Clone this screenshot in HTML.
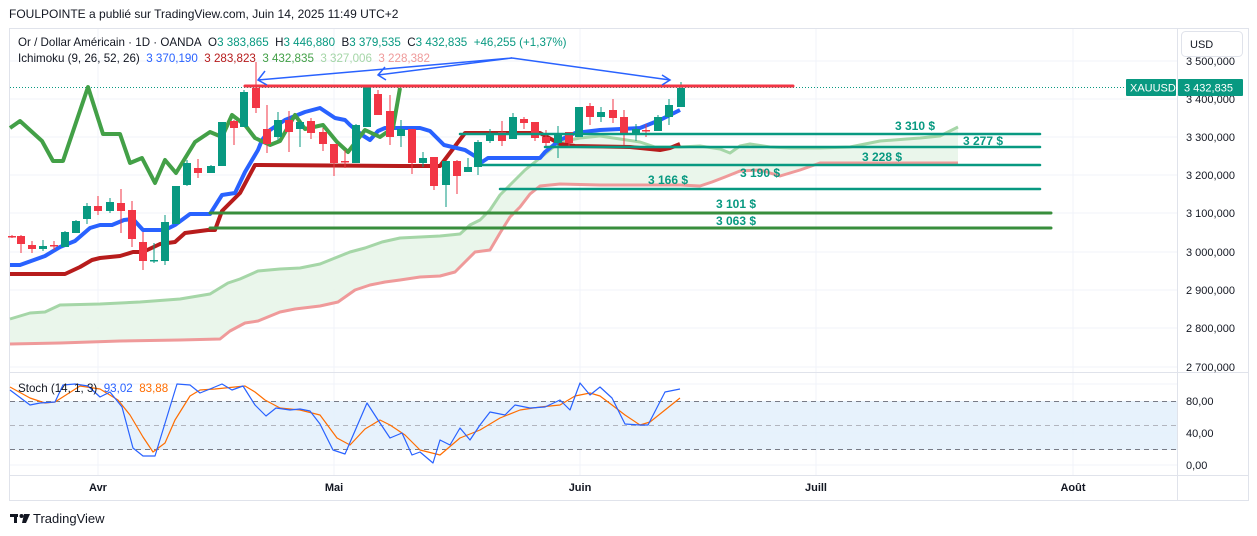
<!DOCTYPE html>
<html><head><meta charset="utf-8"><style>
body{margin:0;width:1257px;height:536px;background:#fff;font-family:"Liberation Sans",sans-serif;overflow:hidden;position:relative}
.t{position:absolute;white-space:nowrap}
</style></head><body>
<div class="t" style="left:9px;top:7px;font-size:12px;color:#131722">FOULPOINTE a publié sur TradingView.com, Juin 14, 2025 11:49 UTC+2</div>
<svg id="s" width="1257" height="536" style="position:absolute;left:0;top:0">
<rect x="9.5" y="28.5" width="1239" height="472" fill="none" stroke="#e0e3eb"/>
<g stroke="#f0f3fa" stroke-width="1">
<line x1="98" y1="29" x2="98" y2="475"/><line x1="334" y1="29" x2="334" y2="475"/><line x1="580" y1="29" x2="580" y2="475"/><line x1="816" y1="29" x2="816" y2="475"/><line x1="1073" y1="29" x2="1073" y2="475"/>
<line x1="10" y1="61" x2="1177" y2="61"/><line x1="10" y1="99" x2="1177" y2="99"/><line x1="10" y1="137" x2="1177" y2="137"/><line x1="10" y1="175" x2="1177" y2="175"/><line x1="10" y1="213" x2="1177" y2="213"/><line x1="10" y1="252" x2="1177" y2="252"/><line x1="10" y1="290" x2="1177" y2="290"/><line x1="10" y1="328" x2="1177" y2="328"/><line x1="10" y1="367" x2="1177" y2="367"/>
<line x1="10" y1="384" x2="1177" y2="384"/><line x1="10" y1="433" x2="1177" y2="433"/><line x1="10" y1="465" x2="1177" y2="465"/>
</g>
<line x1="10" y1="372.5" x2="1248" y2="372.5" stroke="#e0e3eb"/>
<line x1="10" y1="475.5" x2="1248" y2="475.5" stroke="#e0e3eb"/>
<line x1="1177.5" y1="29" x2="1177.5" y2="500" stroke="#e0e3eb"/>
<rect x="10" y="401" width="1167" height="49" fill="#e3f0fc" opacity="0.85"/>
<g stroke="#787b86" stroke-dasharray="5,4" stroke-width="1"><line x1="10" y1="401.5" x2="1177" y2="401.5"/><line x1="10" y1="425.5" x2="1177" y2="425.5" stroke="#b2b5be"/><line x1="10" y1="449.5" x2="1177" y2="449.5"/></g>
<line x1="10" y1="87.5" x2="1126" y2="87.5" stroke="#089981" stroke-dasharray="1,2"/>
<g id="ich"></g>
<g id="cnd"></g>
<g stroke-linecap="round">
<line x1="245" y1="86" x2="793" y2="86" stroke="#f23645" stroke-width="3"/>
<line x1="460" y1="134" x2="1040" y2="134" stroke="#089981" stroke-width="2.5"/>
<line x1="545" y1="147" x2="1040" y2="147" stroke="#089981" stroke-width="2.5"/>
<line x1="480" y1="165" x2="1040" y2="165" stroke="#089981" stroke-width="2.5"/>
<line x1="500" y1="189" x2="1040" y2="189" stroke="#089981" stroke-width="2.5"/>
<line x1="210" y1="213" x2="1051" y2="213" stroke="#388e3c" stroke-width="3"/>
<line x1="210" y1="228" x2="1051" y2="228" stroke="#388e3c" stroke-width="3"/>
</g>
<g stroke="#2962ff" stroke-width="1.5" fill="none">
<path d="M512 58 L258 80 M512 58 L378 75 M512 58 L670 80"/>
<path d="M265 71 L258 80 L267 85 M385 67 L378 75 L386 80 M662 75 L670 80 L662 85"/>
</g>
<g font-size="12" font-weight="bold" fill="#089981" font-family="Liberation Sans,sans-serif">
<text x="895" y="130">3 310 $</text><text x="963" y="145">3 277 $</text><text x="862" y="161">3 228 $</text><text x="740" y="177">3 190 $</text><text x="648" y="184">3 166 $</text><text x="716" y="208">3 101 $</text><text x="716" y="225">3 063 $</text>
</g>
<g id="st"></g>
<g font-size="11" fill="#131722" font-family="Liberation Sans,sans-serif">
<text x="1186" y="65">3 500,000</text>
<text x="1186" y="103">3 400,000</text><text x="1186" y="141">3 300,000</text><text x="1186" y="179">3 200,000</text><text x="1186" y="217">3 100,000</text><text x="1186" y="256">3 000,000</text><text x="1186" y="294">2 900,000</text><text x="1186" y="332">2 800,000</text><text x="1186" y="371">2 700,000</text>
<text x="1186" y="405">80,00</text><text x="1186" y="437">40,00</text><text x="1186" y="469">0,00</text>
</g>
<g font-size="11" font-weight="bold" fill="#131722" font-family="Liberation Sans,sans-serif" text-anchor="middle">
<text x="98" y="491">Avr</text><text x="334" y="491">Mai</text><text x="580" y="491">Juin</text><text x="816" y="491">Juill</text><text x="1073" y="491">Août</text>
</g>
<rect x="1181.5" y="31.5" width="61" height="25" rx="4" fill="#fff" stroke="#e0e3eb"/>
<text x="1190" y="48" font-size="11" fill="#131722">USD</text>
<rect x="1126" y="79" width="50" height="17" rx="1" fill="#089981"/>
<text x="1130" y="91.5" font-size="11" fill="#fff">XAUUSD</text>
<rect x="1178" y="79" width="65" height="17" rx="1" fill="#089981"/>
<text x="1184" y="91.5" font-size="11" fill="#fff">3 432,835</text>
<g fill="#131722"><rect x="10" y="514" width="8" height="3"/><rect x="14" y="514" width="3" height="9"/><circle cx="21.5" cy="516" r="2"/><path d="M24 514 L30 514 L26 523 L22 523 Z"/></g>
<text x="33" y="523" font-size="13" fill="#131722">TradingView</text>
</svg>
<div class="t" style="left:18px;top:36px;font-size:11.6px;color:#131722">Or / Dollar Américain · 1D · OANDA&nbsp; O<span style="color:#089981">3 383,865</span>&nbsp; H<span style="color:#089981">3 446,880</span>&nbsp; B<span style="color:#089981">3 379,535</span>&nbsp; C<span style="color:#089981">3 432,835</span>&nbsp; <span style="color:#089981">+46,255 (+1,37%)</span></div>
<div class="t" style="left:18px;top:52px;font-size:11.6px;color:#131722">Ichimoku (9, 26, 52, 26)&nbsp; <span style="color:#2962ff">3 370,190</span>&nbsp; <span style="color:#b71c1c">3 283,823</span>&nbsp; <span style="color:#43a047">3 432,835</span>&nbsp; <span style="color:#a5d6a7">3 327,006</span>&nbsp; <span style="color:#ef9a9a">3 228,382</span></div>
<div class="t" style="left:18px;top:382px;font-size:11.6px;color:#131722">Stoch (14, 1, 3)&nbsp; <span style="color:#2962ff">93,02</span>&nbsp; <span style="color:#ff6d00">83,88</span></div>
<script>
const NS="http://www.w3.org/2000/svg";
function el(p,t,a){const e=document.createElementNS(NS,t);for(const k in a)e.setAttribute(k,a[k]);p.appendChild(e);return e}
function pl(p,pts,c,w,extra){const a={points:pts.map(q=>q.join(',')).join(' '),fill:'none',stroke:c,'stroke-width':w,'stroke-linejoin':'round'};Object.assign(a,extra||{});return el(p,'polyline',a)}
const A=[[10,319],[30,313],[45,312],[60,305],[100,304],[140,302],[180,299],[210,294],[228,283],[240,279],[258,271],[280,269],[300,268],[320,264],[335,258],[350,252],[365,248],[382,242],[400,238],[420,237],[440,236],[460,234],[470,225],[480,220],[490,210],[500,195],[510,185],[525,170],[540,158],[560,142],[580,138],[600,136],[620,139],[640,142],[655,147],[680,147],[700,146],[720,149],[730,153],[740,146],[750,144],[770,147],[790,148],[820,148],[850,147],[880,141],[920,138],[940,136],[958,127]];
const B=[[10,344],[60,343],[120,341],[180,340],[220,339],[230,331],[245,323],[258,321],[280,312],[295,309],[320,306],[338,302],[355,290],[370,285],[385,282],[400,280],[420,277],[440,276],[455,272],[462,265],[475,252],[490,250],[500,233],[510,217],[520,207],[530,194],[540,186],[560,184],[600,185],[640,185],[680,185],[700,186],[712,182],[725,177],[740,171],[760,170],[780,176],[800,170],[820,163],[850,163],[920,163],[958,163]];
const g=document.getElementById('ich');
el(g,'polygon',{points:A.concat(B.slice().reverse()).map(q=>q.join(',')).join(' '),fill:'#e8f5e9',opacity:0.9});
pl(g,A,'#a5d6a7',3);pl(g,B,'#ef9a9a',3);
pl(g,[[10,274],[65,274],[80,267],[92,260],[100,258],[120,256],[133,252],[143,252],[160,244],[175,242],[185,233],[208,230],[215,230],[222,211],[240,193],[255,165],[260,165],[400,166],[440,166],[465,133],[475,133],[540,133],[560,144],[575,146],[630,147],[660,150],[670,148],[680,144]],'#b71c1c',4);
pl(g,[[10,265],[20,265],[45,256],[60,247],[75,241],[90,228],[100,225],[112,225],[124,220],[133,219],[143,230],[165,230],[175,225],[190,214],[210,214],[222,195],[235,193],[245,172],[258,150],[262,140],[270,130],[285,120],[305,112],[320,108],[335,118],[345,120],[350,125],[362,135],[370,140],[378,131],[385,128],[420,128],[430,131],[444,145],[465,150],[478,158],[482,162],[488,158],[540,158],[545,152],[560,140],[575,133],[600,130],[640,128],[660,120],[680,110]],'#2962ff',4);
pl(g,[[10,128],[20,121],[42,141],[53,161],[63,161],[88,87],[103,134],[120,134],[130,163],[142,158],[155,183],[165,160],[176,173],[195,142],[210,132],[222,137],[232,115],[245,125],[255,138],[270,145],[280,141],[295,115],[305,129],[323,125],[337,142],[348,152],[365,130],[380,137],[393,128],[400,88]],'#43a047',4);
const C=[[12,236,237,235,238],[21,236,244,235,253],[32,245,249,241,253],[43,249,246,240,251],[54,245,246,241,250],[65,247,232,231,247],[76,233,221,220,224],[87,219,206,203,224],[98,206,211,196,215],[110,211,202,198,213],[121,203,211,189,233],[132,210,239,201,247],[143,242,261,232,270],[154,261,260,243,263],[165,261,222,215,265],[176,224,186,186,223],[187,185,163,160,186],[198,168,173,159,178],[211,173,166,165,173],[222,166,122,122,166],[234,121,128,120,145],[244,127,92,90,127],[256,88,108,62,113],[267,129,144,105,153],[278,137,120,112,140],[289,120,132,111,152],[300,129,122,120,147],[311,121,133,118,139],[323,132,144,128,151],[334,144,163,144,176],[345,161,162,150,168],[356,163,125,124,163],[367,127,87,86,127],[378,94,115,90,115],[390,111,137,95,145],[401,136,129,120,147],[412,129,163,129,174],[423,163,158,152,167],[434,157,186,157,190],[446,185,161,161,207],[457,161,176,160,194],[468,172,167,158,172],[478,167,142,140,175],[490,141,133,129,143],[502,132,141,121,146],[513,139,117,113,139],[524,119,123,117,129],[535,122,138,122,141],[546,137,143,130,148],[558,143,133,126,158],[569,132,143,132,147],[579,137,107,107,137],[590,106,117,103,125],[601,117,112,107,122],[613,110,118,99,123],[624,117,135,110,145],[636,135,129,124,141],[646,130,131,124,137],[658,131,117,115,131],[669,117,105,99,125],[681,107,88,82,107]];
const cg=document.getElementById('cnd');
C.forEach(([x,o,c,h,l])=>{const up=c<=o,col=up?'#089981':'#f23645';
el(cg,'line',{x1:x,x2:x,y1:h,y2:l,stroke:col,'stroke-width':1});
el(cg,'rect',{x:x-4,y:Math.min(o,c),width:8,height:Math.max(1.5,Math.abs(o-c)),fill:col});});
const sg=document.getElementById('st');
pl(sg,[[10,387],[30,398],[45,403],[55,402],[80,386],[100,389],[118,400],[130,415],[143,437],[153,452],[165,443],[175,420],[190,396],[200,390],[215,389],[245,386],[255,392],[265,400],[280,408],[300,410],[320,415],[337,438],[350,445],[365,429],[380,420],[390,425],[405,435],[420,450],[440,455],[460,438],[480,430],[500,418],[520,410],[540,407],[560,405],[575,396],[590,393],[600,396],[612,405],[625,415],[640,425],[650,422],[665,410],[680,398]],'#ff6d00',1.2);
pl(sg,[[10,390],[30,405],[40,403],[55,402],[63,385],[75,384],[88,386],[100,397],[110,392],[122,407],[133,448],[143,456],[155,456],[177,384],[190,385],[200,393],[210,389],[222,384],[232,390],[243,386],[255,405],[266,416],[276,408],[290,410],[300,409],[310,411],[320,424],[333,450],[345,454],[367,403],[378,420],[390,438],[402,433],[412,455],[420,452],[433,463],[440,440],[450,445],[460,428],[470,440],[480,425],[490,412],[505,415],[515,405],[530,408],[545,407],[560,400],[570,410],[580,383],[590,395],[600,387],[612,398],[625,424],[640,425],[648,425],[665,392],[680,389]],'#2962ff',1.2);
</script>
</body></html>
